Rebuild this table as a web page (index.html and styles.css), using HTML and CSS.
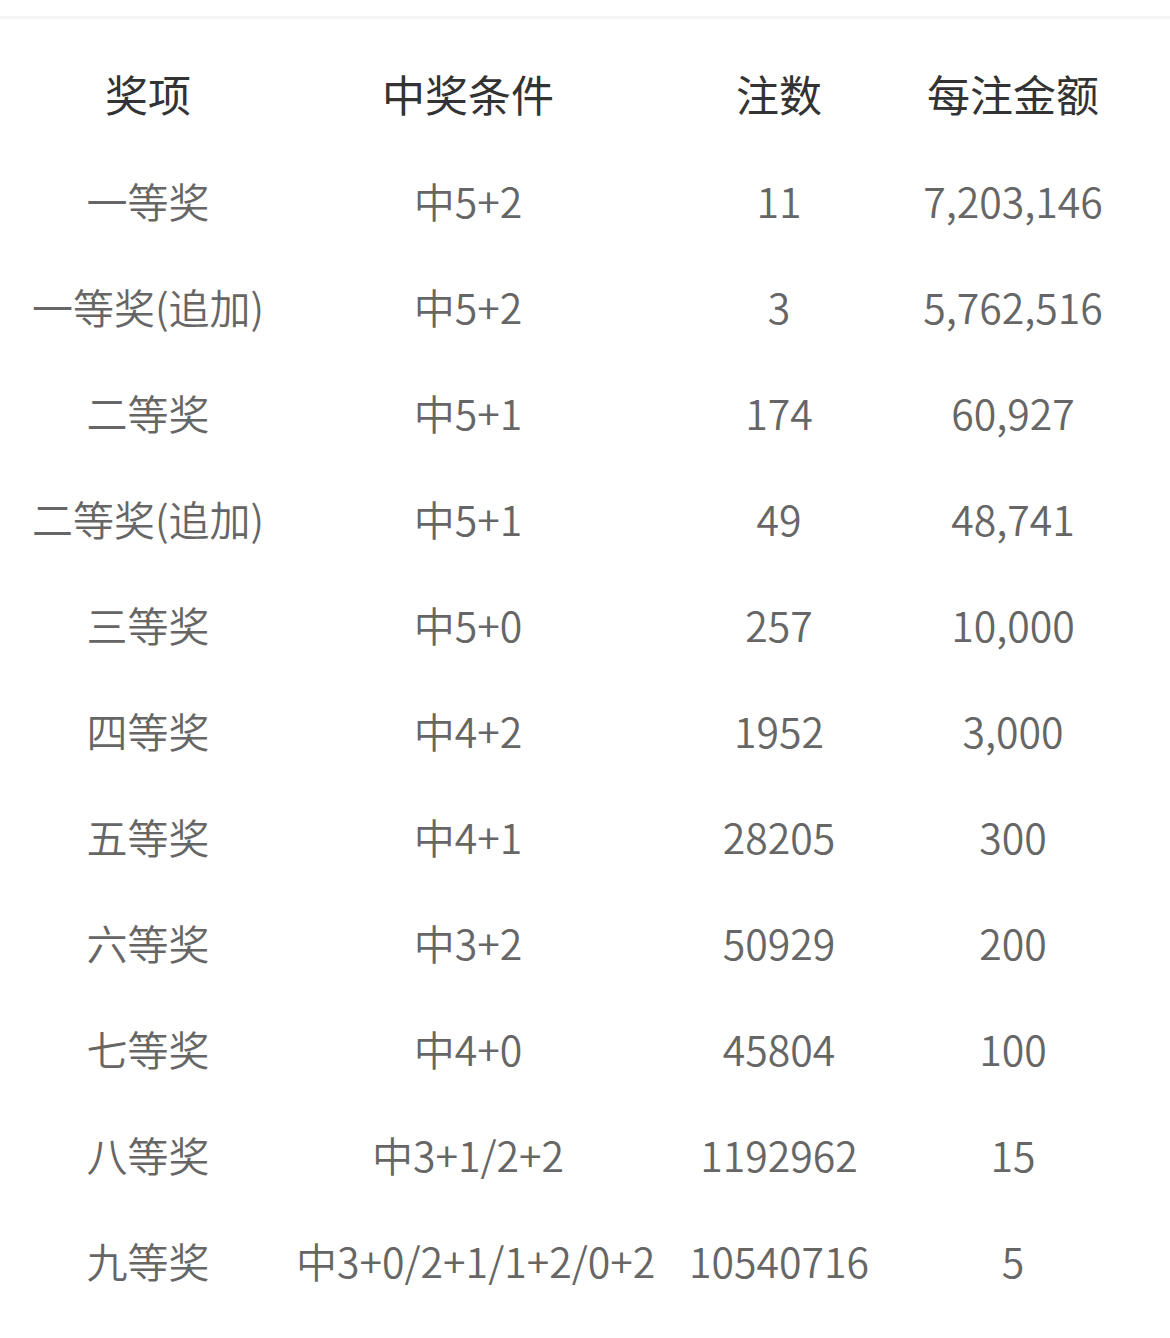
FILE: index.html
```html
<!DOCTYPE html>
<html lang="zh-CN">
<head>
<meta charset="utf-8">
<link rel="stylesheet" href="styles.css">
</head>
<body>
<div class="topbar"></div>
<div class="table">
  <div class="row head">
    <div class="cell">奖项</div><div class="cell">中奖条件</div><div class="cell">注数</div><div class="cell">每注金额</div>
  </div>
  <div class="row"><div class="cell">一等奖</div><div class="cell">中5+2</div><div class="cell">11</div><div class="cell">7,203,146</div></div>
  <div class="row"><div class="cell">一等奖(追加)</div><div class="cell">中5+2</div><div class="cell">3</div><div class="cell">5,762,516</div></div>
  <div class="row"><div class="cell">二等奖</div><div class="cell">中5+1</div><div class="cell">174</div><div class="cell">60,927</div></div>
  <div class="row"><div class="cell">二等奖(追加)</div><div class="cell">中5+1</div><div class="cell">49</div><div class="cell">48,741</div></div>
  <div class="row"><div class="cell">三等奖</div><div class="cell">中5+0</div><div class="cell">257</div><div class="cell">10,000</div></div>
  <div class="row"><div class="cell">四等奖</div><div class="cell">中4+2</div><div class="cell">1952</div><div class="cell">3,000</div></div>
  <div class="row"><div class="cell">五等奖</div><div class="cell">中4+1</div><div class="cell">28205</div><div class="cell">300</div></div>
  <div class="row"><div class="cell">六等奖</div><div class="cell">中3+2</div><div class="cell">50929</div><div class="cell">200</div></div>
  <div class="row"><div class="cell">七等奖</div><div class="cell">中4+0</div><div class="cell">45804</div><div class="cell">100</div></div>
  <div class="row"><div class="cell">八等奖</div><div class="cell">中3+1/2+2</div><div class="cell">1192962</div><div class="cell">15</div></div>
  <div class="row"><div class="cell">九等奖</div><div class="cell">中3+0/2+1/1+2/0+2</div><div class="cell">10540716</div><div class="cell">5</div></div>
</div>
</body>
</html>
```
FILE: styles.css
```css
html, body {
  margin: 0;
  padding: 0;
  background: #ffffff;
}
body {
  font-family: "Noto Sans CJK SC", "Noto Sans", sans-serif;
  color: #666666;
}
.topbar {
  height: 16px;
  border-bottom: 3px solid #f5f5f5;
}
.table {
  padding-top: 20px;
}
.row {
  display: grid;
  grid-template-columns: 296px 344px 278px 190px;
  height: 106px;
  align-items: center;
  font-size: 41px;
  font-weight: 350;
}
.row.head {
  height: 108px;
  font-size: 43px;
  font-weight: 400;
  color: #333333;
}
.cell {
  text-align: center;
  white-space: nowrap;
}
```
